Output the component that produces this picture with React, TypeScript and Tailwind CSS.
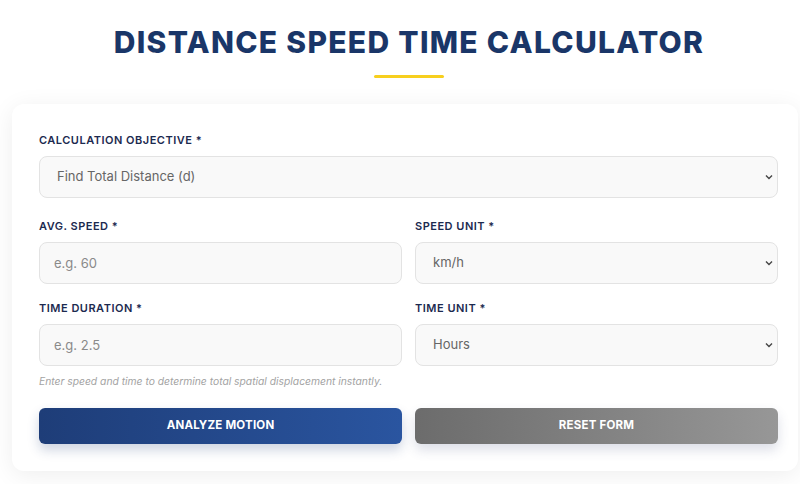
import React from "react";

const font = { fontFamily: "Inter, 'Noto Sans', sans-serif" };

const Chevron = () => (
  <svg
    className="pointer-events-none absolute right-[4px] top-1/2 -translate-y-1/2"
    width="10"
    height="10"
    viewBox="0 0 10 10"
    fill="none"
    stroke="#444"
    strokeWidth="1.4"
  >
    <path d="M2 3.5 L5 6.5 L8 3.5" />
  </svg>
);

const Label = ({ children }: { children: React.ReactNode }) => (
  <label className="mb-[9px] block text-[11px] font-semibold uppercase leading-[14px] tracking-[0.5px] text-[#1c2a4f]">
    {children}
  </label>
);

const boxCls =
  "h-[42px] w-full rounded-[8px] border border-[#e3e3e3] bg-[#f9f9f9] text-[13px] text-[#666] outline-none";

const SelectBox = ({ value }: { value: string }) => (
  <div className="relative">
    <div className={`${boxCls} flex items-center px-[17px]`}>{value}</div>
    <Chevron />
  </div>
);

const InputBox = ({ placeholder }: { placeholder: string }) => (
  <input
    className={`${boxCls} px-[14px] placeholder:text-[#8a8a8a]`}
    placeholder={placeholder}
  />
);

export default function App() {
  return (
    <div className="min-h-[484px] w-[800px] overflow-hidden bg-white" style={font}>
      <div className="flex flex-col items-center pl-[18px] pt-[24px]">
        <h1 className="text-[30px] font-extrabold leading-[36px] tracking-[1.3px] text-[#1a3668]">
          DISTANCE SPEED TIME CALCULATOR
        </h1>
        <div className="mt-[15px] h-[3px] w-[70px] rounded-full bg-[#f7cf1e]" />
      </div>

      <div className="ml-[12px] mt-[26px] w-[786px] rounded-[12px] bg-white pb-[27px] pl-[27px] pr-[20px] pt-[29px] shadow-[0_4px_24px_rgba(0,0,0,0.07)]">
        <Label>Calculation Objective *</Label>
        <SelectBox value="Find Total Distance (d)" />

        <div className="mt-[21px] grid grid-cols-2 gap-x-[13px] gap-y-[17px]">
          <div>
            <Label>Avg. Speed *</Label>
            <InputBox placeholder="e.g. 60" />
          </div>
          <div>
            <Label>Speed Unit *</Label>
            <SelectBox value="km/h" />
          </div>
          <div>
            <Label>Time Duration *</Label>
            <InputBox placeholder="e.g. 2.5" />
          </div>
          <div>
            <Label>Time Unit *</Label>
            <SelectBox value="Hours" />
          </div>
        </div>

        <p className="mt-[9px] text-[10.3px] italic leading-[12px] text-[#a3a3a3]">
          Enter speed and time to determine total spatial displacement instantly.
        </p>

        <div className="mt-[21px] grid grid-cols-2 gap-x-[13px]">
          <button className="h-[36px] rounded-[6px] bg-gradient-to-r from-[#1e3d78] to-[#2a55a0] text-[11.5px] font-bold tracking-[0.2px] text-white shadow-[0_6px_12px_rgba(30,61,120,0.22)]">
            ANALYZE MOTION
          </button>
          <button className="h-[36px] rounded-[6px] bg-gradient-to-r from-[#6c6c6c] to-[#979797] text-[11.5px] font-bold tracking-[0.2px] text-white shadow-[0_6px_12px_rgba(60,70,120,0.18)]">
            RESET FORM
          </button>
        </div>
      </div>
    </div>
  );
}
